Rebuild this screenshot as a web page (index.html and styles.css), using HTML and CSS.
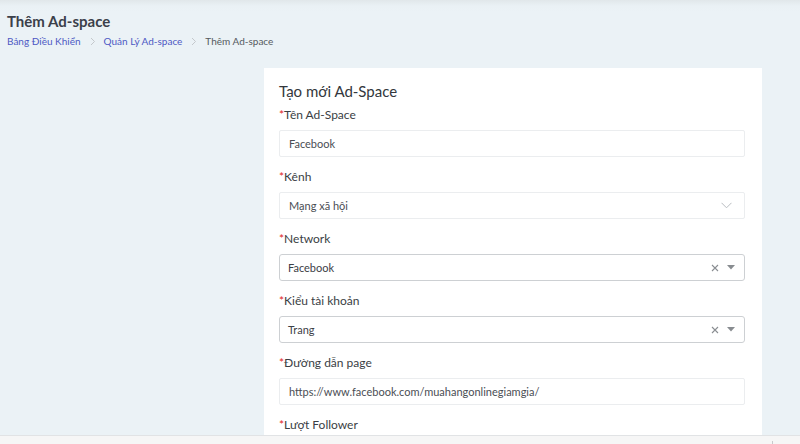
FILE: index.html
```html
<!DOCTYPE html>
<html lang="vi">
<head>
<meta charset="utf-8">
<title>Thêm Ad-space</title>
<link rel="stylesheet" href="styles.css">
</head>
<body>
<div class="page">
  <header class="page-header">
    <h1 class="page-title">Thêm Ad-space</h1>
    <nav class="breadcrumb">
      <a class="crumb-link" href="#">Bảng Điều Khiển</a>
      <span class="crumb-sep"><svg width="6" height="9" viewBox="0 0 6 9"><path d="M1 1l3.5 3.5L1 8" fill="none" stroke="#c4c8cc" stroke-width="1"/></svg></span>
      <a class="crumb-link" href="#">Quản Lý Ad-space</a>
      <span class="crumb-sep"><svg width="6" height="9" viewBox="0 0 6 9"><path d="M1 1l3.5 3.5L1 8" fill="none" stroke="#c4c8cc" stroke-width="1"/></svg></span>
      <span class="crumb-current">Thêm Ad-space</span>
    </nav>
  </header>
  <main class="content">
    <div class="spacer"></div>
    <section class="card">
      <h2 class="card-title">Tạo mới Ad-Space</h2>
      <div class="field">
        <label class="label"><span class="req">*</span>Tên Ad-Space</label>
        <div class="input">Facebook</div>
      </div>
      <div class="field">
        <label class="label"><span class="req">*</span>Kênh</label>
        <div class="input select-native">
          <span>Mạng xã hội</span>
          <svg class="chevron" width="11" height="7" viewBox="0 0 11 7"><path d="M0.5 0.8L5.5 5.8L10.5 0.8" fill="none" stroke="#b8bcc0" stroke-width="1"/></svg>
        </div>
      </div>
      <div class="field">
        <label class="label"><span class="req">*</span>Network</label>
        <div class="select2">
          <span>Facebook</span>
          <span class="select2-icons">
            <svg width="8" height="8" viewBox="0 0 8 8"><path d="M1 1L7 7M7 1L1 7" stroke="#8a8e92" stroke-width="1.1"/></svg>
            <svg width="8" height="5" viewBox="0 0 8 5"><path d="M0 0H8L4 4.5Z" fill="#888c90"/></svg>
          </span>
        </div>
      </div>
      <div class="field">
        <label class="label"><span class="req">*</span>Kiểu tài khoản</label>
        <div class="select2">
          <span>Trang</span>
          <span class="select2-icons">
            <svg width="8" height="8" viewBox="0 0 8 8"><path d="M1 1L7 7M7 1L1 7" stroke="#8a8e92" stroke-width="1.1"/></svg>
            <svg width="8" height="5" viewBox="0 0 8 5"><path d="M0 0H8L4 4.5Z" fill="#888c90"/></svg>
          </span>
        </div>
      </div>
      <div class="field">
        <label class="label"><span class="req">*</span>Đường dẫn page</label>
        <div class="input">https://www.facebook.com/muahangonlinegiamgia/</div>
      </div>
      <div class="field">
        <label class="label"><span class="req">*</span>Lượt Follower</label>
        <div class="input"></div>
      </div>
    </section>
  </main>
</div>
<footer class="footer-bar"><span class="footer-divider"></span></footer>
</body>
</html>
```
FILE: styles.css
```css
html, body {
  margin: 0;
  padding: 0;
  height: 100%;
  overflow: hidden;
}
body {
  font-family: Lato, "Open Sans", "Noto Sans", sans-serif;
  background: linear-gradient(#e1e7ea 0, #eaf1f5 6px, #ebf2f6 12px) no-repeat, #ebf2f6;
  color: #333;
}
.page {
  padding: 0;
}
.page-header {
  padding: 12px 7px 0;
  height: 56px;
  box-sizing: border-box;
}
.page-title {
  margin: 0;
  font-size: 15px;
  line-height: 19px;
  font-weight: 700;
  color: #3b404a;
}
.breadcrumb {
  display: flex;
  align-items: center;
  margin-top: 3px;
  font-size: 10px;
  line-height: 14px;
}
.crumb-link {
  color: #4d59c4;
  text-decoration: none;
}
.crumb-sep {
  display: inline-flex;
  align-items: center;
  margin: 0 8px 0 9px;
}
.crumb-current {
  color: #555a60;
}
.content {
  display: grid;
  grid-template-columns: 264px 498px;
  margin-top: 12px;
}
.card {
  background: #fff;
  padding: 13px 17px 20px 15px;
  min-height: 500px;
}
.card-title {
  margin: 0 0 6px;
  font-size: 15px;
  line-height: 20px;
  font-weight: 400;
  color: #33373c;
}
.field {
  margin-bottom: 12px;
}
.label {
  display: block;
  font-size: 12px;
  line-height: 16px;
  color: #3a3e44;
  margin-bottom: 7px;
}
.req {
  color: #e02424;
}
.input {
  height: 27px;
  box-sizing: border-box;
  border: 1px solid #ebedef;
  border-radius: 2px;
  padding: 0 9px;
  display: flex;
  align-items: center;
  font-size: 11px;
  color: #4a4e54;
}
.select-native {
  justify-content: space-between;
  padding-right: 12px;
}
.chevron {
  display: block;
}
.select2 {
  height: 27px;
  box-sizing: border-box;
  border: 1px solid #cdd0d3;
  border-radius: 3px;
  padding: 0 8px;
  display: flex;
  align-items: center;
  justify-content: space-between;
  font-size: 11px;
  color: #3c4046;
}
.select2-icons {
  display: flex;
  align-items: center;
  gap: 8px;
  padding-right: 1px;
}
.select2-icons svg {
  display: block;
}
.footer-bar {
  position: fixed;
  left: 0;
  right: 0;
  bottom: 0;
  height: 8px;
  background: #f6f6f6;
  border-top: 1px solid #e1e3e5;
}
.footer-divider {
  position: absolute;
  left: 772px;
  top: 5px;
  width: 1px;
  height: 4px;
  background: #c8cacc;
}
```
